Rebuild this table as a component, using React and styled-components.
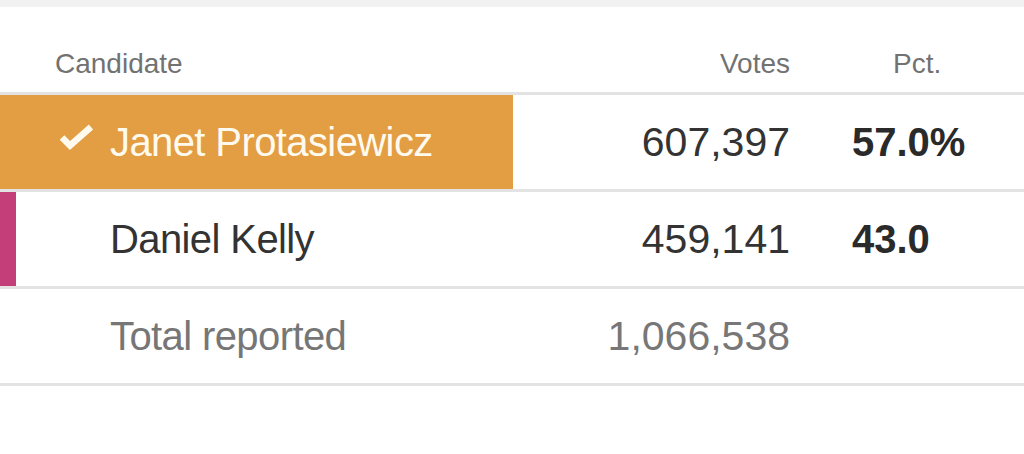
import React from "react";
import styled, { createGlobalStyle } from "styled-components";

const GlobalStyle = createGlobalStyle`
  html, body {
    margin: 0;
    padding: 0;
    background: #ffffff;
  }
  body {
    font-family: "Liberation Sans", Arial, sans-serif;
    -webkit-font-smoothing: antialiased;
  }
`;

const Page = styled.div`
  width: 1024px;
  height: 454px;
  overflow: hidden;
  background: #ffffff;
`;

const TopBand = styled.div`
  height: 7px;
  background: #f1f1f1;
`;

const Table = styled.div`
  display: flex;
  flex-direction: column;
`;

const Row = styled.div`
  display: grid;
  grid-template-columns: 550px 240px 234px;
  align-items: center;
  border-bottom: 3px solid #e3e3e3;
  height: ${(p) => (p.$header ? "auto" : "94px")};
  box-sizing: content-box;
  background: ${(p) =>
    p.$barColor
      ? `linear-gradient(to right, ${p.$barColor} ${p.$barWidth}px, transparent ${p.$barWidth}px)`
      : "transparent"};
`;

const HeaderRow = styled(Row)`
  padding: 43px 0 14px;
  align-items: end;
`;

const HeadCell = styled.div`
  font-size: 28px;
  line-height: 28px;
  color: #727272;
  text-align: ${(p) => p.$align || "left"};
  padding-left: ${(p) => p.$padLeft || 0}px;
`;

const NameCell = styled.div`
  display: flex;
  align-items: center;
  padding-left: 55px;
`;

const CheckSlot = styled.div`
  width: 55px;
  height: 40px;
  display: flex;
  align-items: center;
  flex-shrink: 0;
`;

const Name = styled.span`
  font-size: 40px;
  line-height: 40px;
  letter-spacing: -0.6px;
  white-space: nowrap;
  color: ${(p) => (p.$winner ? "#fffaee" : p.$muted ? "#767676" : "#333333")};
`;

const Votes = styled.div`
  font-size: 41px;
  line-height: 41px;
  text-align: right;
  color: ${(p) => (p.$muted ? "#777777" : "#333333")};
`;

const Pct = styled.div`
  font-size: 40px;
  line-height: 40px;
  font-weight: 700;
  color: #2a2a2a;
  padding-left: 62px;
`;

const CheckSvg = styled.svg`
  display: block;
  margin-left: 4px;
  flex-shrink: 0;
`;

const CheckIcon = () => (
  <CheckSvg width="36" height="36" viewBox="0 0 36 36">
    <polyline
      points="3,13.5 11,21.5 32,3"
      fill="none"
      stroke="#fffaee"
      strokeWidth="6.5"
      strokeLinecap="butt"
      strokeLinejoin="miter"
    />
  </CheckSvg>
);

const candidates = [
  { name: "Janet Protasiewicz", votes: "607,397", pct: "57.0%", winner: true, color: "#e39d42", bar: 513 },
  { name: "Daniel Kelly", votes: "459,141", pct: "43.0", winner: false, color: "#c43e79", bar: 16 },
];

export default function App() {
  return (
    <Page>
      <GlobalStyle />
      <TopBand />
      <Table>
        <HeaderRow $header>
          <HeadCell $padLeft={55}>Candidate</HeadCell>
          <HeadCell $align="right">Votes</HeadCell>
          <HeadCell $padLeft={103}>Pct.</HeadCell>
        </HeaderRow>
        {candidates.map((c) => (
          <Row key={c.name} $barColor={c.color} $barWidth={c.bar}>
            <NameCell>
              <CheckSlot>{c.winner && <CheckIcon />}</CheckSlot>
              <Name $winner={c.winner}>{c.name}</Name>
            </NameCell>
            <Votes>{c.votes}</Votes>
            <Pct>{c.pct}</Pct>
          </Row>
        ))}
        <Row>
          <NameCell>
            <CheckSlot />
            <Name $muted>Total reported</Name>
          </NameCell>
          <Votes $muted>1,066,538</Votes>
          <div />
        </Row>
      </Table>
    </Page>
  );
}
